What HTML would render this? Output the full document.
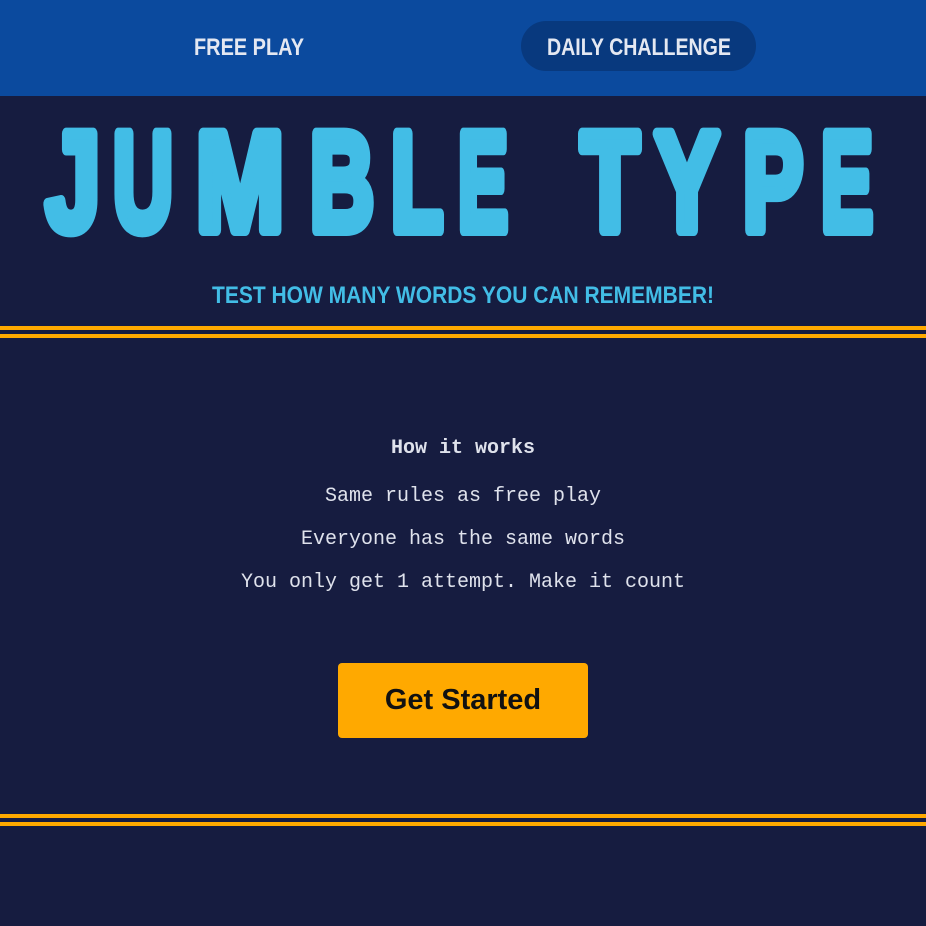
<!DOCTYPE html>
<html><head><style>
body{margin:0;width:926px;height:926px;background:#161c40;overflow:hidden;font-family:"Liberation Sans",sans-serif}
.hdr{position:absolute;left:0;top:0;width:926px;height:96px;background:#0b4a9e}
.pill{position:absolute;left:521px;top:21px;width:235px;height:50px;border-radius:25px;background:#08397e}
.line{position:absolute;left:0;width:926px;height:4px;background:#ffa900}
.mono{position:absolute;left:0;width:926px;text-align:center;font-family:"Liberation Mono",monospace;color:#dfe2ec;font-size:20px;line-height:24px}
.btn{position:absolute;left:338px;top:663px;width:250px;height:75px;background:#ffa900;border-radius:4px;text-align:center;line-height:75px;font-size:29px;font-weight:bold;color:#111}
</style></head><body>
<div class="hdr"></div>
<div class="pill"></div>
<svg width="926" height="340" style="position:absolute;left:0;top:0">
<text x="249" y="55" text-anchor="middle" font-family="Liberation Sans" font-weight="bold" font-size="24" fill="#e4e8f2" textLength="110" lengthAdjust="spacingAndGlyphs">FREE PLAY</text>
<text x="639" y="55" text-anchor="middle" font-family="Liberation Sans" font-weight="bold" font-size="24" fill="#e4e8f2" textLength="184" lengthAdjust="spacingAndGlyphs">DAILY CHALLENGE</text>
<g font-family="Liberation Sans" font-weight="bold" font-size="140" fill="#42bde6" stroke="#42bde6" stroke-width="12" stroke-linejoin="round">
<text x="46" y="230" textLength="54" lengthAdjust="spacingAndGlyphs">J</text>
<text x="113" y="230" textLength="60" lengthAdjust="spacingAndGlyphs">U</text>
<text x="196" y="230" textLength="88" lengthAdjust="spacingAndGlyphs">M</text>
<text x="310" y="230" textLength="64" lengthAdjust="spacingAndGlyphs">B</text>
<text x="391" y="230" textLength="52" lengthAdjust="spacingAndGlyphs">L</text>
<text x="458" y="230" textLength="50" lengthAdjust="spacingAndGlyphs">E</text>
<text x="581" y="230" textLength="58" lengthAdjust="spacingAndGlyphs">T</text>
<text x="655" y="230" textLength="64" lengthAdjust="spacingAndGlyphs">Y</text>
<text x="743" y="230" textLength="60" lengthAdjust="spacingAndGlyphs">P</text>
<text x="821" y="230" textLength="52" lengthAdjust="spacingAndGlyphs">E</text>
</g>
<text x="463" y="303" text-anchor="middle" font-family="Liberation Sans" font-weight="bold" font-size="24" fill="#42bde6" textLength="502" lengthAdjust="spacingAndGlyphs">TEST HOW MANY WORDS YOU CAN REMEMBER!</text>
</svg>
<div class="line" style="top:326px"></div>
<div class="line" style="top:334px"></div>
<div class="mono" style="top:437px;font-weight:bold">How it works</div>
<div class="mono" style="top:485px">Same rules as free play</div>
<div class="mono" style="top:528px">Everyone has the same words</div>
<div class="mono" style="top:571px">You only get 1 attempt. Make it count</div>
<div class="btn">Get Started</div>
<div class="line" style="top:814px"></div>
<div class="line" style="top:822px"></div>
</body></html>
